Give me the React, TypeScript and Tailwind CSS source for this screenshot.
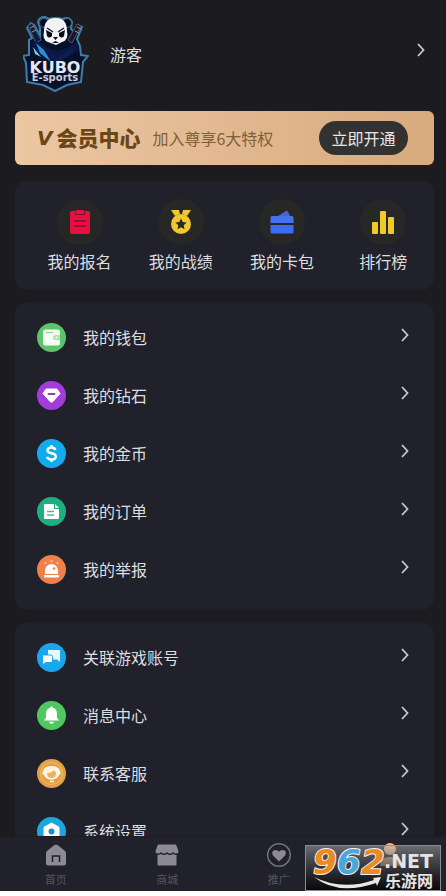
import type { ReactNode } from 'react'

type Item = {
  name: string
  link: string
  icon: ReactNode
}

const Chevron = () => (
  <svg viewBox="0 0 8 14" className="w-2 h-3.5" fill="none">
    <path d="M1 1l5.5 6L1 13" stroke="#c9c9cc" strokeWidth="1.8" />
  </svg>
)

const Logo = () => (
  <svg viewBox="0 0 66 76" className="w-[66px] h-[76px]" aria-label="KUBO E-sports">
    <path
      d="M17 12L15 6Q16 1 22 1L26 3Q32 1 40 3Q46 0 49 6L48 13L51 16L55 9L59 11L54 23L57 30L58 39L65 40L60 46L58 66L44 69L32 75L20 69L4 66L3 47L0 40L6 39V24L9 22L4 12L8 7L11 9L17 19Z"
      fill="#07102b"
      stroke="#3f7ea8"
      strokeWidth="2"
    />
    <path d="M5 10l4-3 9 17-5 3z" fill="#151b30" stroke="#41617f" strokeWidth="1" />
    <path d="M58 10l-4-2-9 16 4 3z" fill="#1c1624" stroke="#5d5262" strokeWidth="1" />
    <path d="M7 12l4-2M9 16l4-2M54 11l4 2M52 15l4 2" stroke="#8398a8" />
    <path d="M10 25L20 27Q32 43 53 26L56 34L44 41L33 47L18 41L8 32Z" fill="#091844" />
    <path d="M13 27L17 37L28 46L21 34Z" fill="#2a8ed1" />
    <path d="M10 31L18 41L12 38Z" fill="#78c9eb" />
    <path d="M24 36L34 42L54 29L49 37L34 47Z" fill="#101c56" />
    <circle cx="21" cy="7" r="4.5" fill="#070a18" stroke="#356a8d" />
    <circle cx="44" cy="7" r="4.5" fill="#070a18" stroke="#356a8d" />
    <path
      d="M21 15Q21 2 32.500 2Q44 2 44 15Q46 24 39 26L33 29L25 26Q19 24 21 15Z"
      fill="#f0f2f3"
    />
    <path d="M23 14l6 3v3q-3 3-5 0zM42 14l-6 3v3q3 3 5 0z" fill="#0b0d16" />
    <path d="M24 12l6 4M41 12l-6 4" stroke="#0b0d16" strokeWidth="1.2" />
    <path d="M30 21h5l-2.500 3zM29 27l3.500-2 3.500 2" fill="#0b0d16" />
    <text
      x="32"
      y="57"
      textAnchor="middle"
      fontFamily="DejaVu Sans"
      fontWeight="700"
      fontSize="16"
      fill="#e6e7ee"
    >
      KUBO
    </text>
    <text
      x="32"
      y="65"
      textAnchor="middle"
      fontFamily="DejaVu Sans"
      fontWeight="700"
      fontSize="10"
      fill="#c9ccd8"
    >
      E-sports
    </text>
  </svg>
)

const stats: Item[] = [
  {
    name: '我的报名',
    link: '#signup',
    icon: (
      <svg viewBox="0 0 24 24" className="size-6">
        <rect x="2" y="1" width="20" height="23" rx="2" fill="#e90f43" />
        <path d="M7 0h10v4a1 1 0 0 1-1 1H8a1 1 0 0 1-1-1z" fill="#6d1730" />
        <rect x="8" y="0" width="8" height="4" rx="1" fill="#e90f43" />
        <path d="M6 11h12M6 16h12" stroke="#6d1730" strokeWidth="1.5" />
      </svg>
    ),
  },
  {
    name: '我的战绩',
    link: '#record',
    icon: (
      <svg viewBox="0 0 24 24" className="size-6">
        <path d="M2 0h8l1 4-5 2zM22 0h-8l-1 4 5 2z" fill="#eec92f" />
        <circle cx="12" cy="14" r="10" fill="#eec92f" />
        <path
          d="M12 8.500l1.700 3.600 3.900.5-2.900 2.700.8 3.900-3.500-1.900-3.500 1.900.8-3.900-2.900-2.700 3.900-.5z"
          fill="#2b2a20"
        />
      </svg>
    ),
  },
  {
    name: '我的卡包',
    link: '#cards',
    icon: (
      <svg viewBox="0 0 24 24" className="size-6">
        <path d="M8 6l8-5q1-1 2 1l2 4z" fill="#4566cf" />
        <path d="M2 6h20a1.500 1.500 0 0 1 1.500 1.500V13H.5V7.500A1.500 1.500 0 0 1 2 6z" fill="#4672ed" />
        <path d="M.5 15h23v7.500a1 1 0 0 1-1 1h-21a1 1 0 0 1-1-1z" fill="#3c6cf2" />
      </svg>
    ),
  },
  {
    name: '排行榜',
    link: '#rank',
    icon: (
      <svg viewBox="0 0 24 24" className="size-6" fill="#eecb28">
        <rect x="1" y="12" width="6" height="12" rx="1" />
        <rect x="9" y="1" width="6" height="23" rx="1" />
        <rect x="17" y="7" width="6" height="17" rx="1" />
      </svg>
    ),
  },
]

const assets: Item[] = [
  {
    name: '我的钱包',
    link: '#wallet',
    icon: (
      <svg viewBox="0 0 29 29" className="size-[29px]">
        <circle cx="14.500" cy="14.500" r="14.500" fill="#5cc56c" />
        <rect x="6" y="6.500" width="17" height="16" rx="2.500" fill="#f3fff3" />
        <path d="M9 9.500h7" stroke="#8ed99a" strokeWidth="1.300" />
        <path d="M23 12h-4.500a2.500 2.500 0 0 0 0 5H23z" fill="#a9e2b0" />
        <circle cx="19.500" cy="14.500" r="1" fill="#fff" />
      </svg>
    ),
  },
  {
    name: '我的钻石',
    link: '#diamond',
    icon: (
      <svg viewBox="0 0 29 29" className="size-[29px]">
        <circle cx="14.500" cy="14.500" r="14.500" fill="#a43cda" />
        <path
          d="M9 8h11l3 4.500-7 8q-1.500 1.500-3 0l-7-8z"
          fill="#fff"
          stroke="#fff"
          strokeLinejoin="round"
        />
        <path d="M11.500 13h6" stroke="#8d3fb4" strokeWidth="1.800" strokeLinecap="round" />
      </svg>
    ),
  },
  {
    name: '我的金币',
    link: '#coin',
    icon: (
      <svg viewBox="0 0 29 29" className="size-[29px]">
        <circle cx="14.500" cy="14.500" r="14.500" fill="#14abee" />
        <path
          d="M18.500 11q-1-2.500-4-2.500-4 0-4 2.800 0 2.200 4 3 4.300.8 4.300 3.200 0 3-4.300 3-3.500 0-4.500-2.700M14.500 6v2.500M14.500 20.500V23"
          fill="none"
          stroke="#fff"
          strokeWidth="2.400"
        />
      </svg>
    ),
  },
  {
    name: '我的订单',
    link: '#order',
    icon: (
      <svg viewBox="0 0 29 29" className="size-[29px]">
        <circle cx="14.500" cy="14.500" r="14.500" fill="#1fae81" />
        <path d="M8 7h9v5h5v9a1 1 0 0 1-1 1H8a1 1 0 0 1-1-1V8a1 1 0 0 1 1-1z" fill="#fff" />
        <path d="M18 7l4 4h-4z" fill="#e2fff3" />
        <path d="M10 14.500h7M10 18h7" stroke="#58b792" strokeWidth="1.400" />
      </svg>
    ),
  },
  {
    name: '我的举报',
    link: '#report',
    icon: (
      <svg viewBox="0 0 29 29" className="size-[29px]">
        <circle cx="14.500" cy="14.500" r="14.500" fill="#ee804a" />
        <path d="M8 19v-3.500a6.500 6.500 0 0 1 13 0V19z" fill="#fff" />
        <rect x="7" y="20" width="15" height="2.500" rx="1" fill="#fff" />
        <circle cx="17" cy="13.500" r="1.300" fill="#ee804a" />
        <g fill="#ffd6bd">
          <circle cx="8.500" cy="8" r="1" />
          <circle cx="14.500" cy="6" r="1" />
          <circle cx="20.500" cy="8" r="1" />
        </g>
      </svg>
    ),
  },
]

const services: Item[] = [
  {
    name: '关联游戏账号',
    link: '#account',
    icon: (
      <svg viewBox="0 0 29 29" className="size-[29px]">
        <circle cx="14.500" cy="14.500" r="14.500" fill="#18a7ec" />
        <path d="M11 7h12v12l-3-2.500h-9z" fill="#e8f8ff" />
        <path d="M6 12h8q1.500 0 1.500 1.500V18q0 1.500-1.500 1.500H9L5.500 22V12.500z" fill="#fff" stroke="#18a7ec" />
      </svg>
    ),
  },
  {
    name: '消息中心',
    link: '#message',
    icon: (
      <svg viewBox="0 0 29 29" className="size-[29px]">
        <circle cx="14.500" cy="14.500" r="14.500" fill="#4fc95f" />
        <path
          d="M14.500 5.500a1.300 1.300 0 0 1 1.300 1.300q4.200 1.200 4.200 6v4l2.200 2.700H6.800L9 16.800v-4q0-4.800 4.200-6a1.300 1.300 0 0 1 1.300-1.300z"
          fill="#fff"
        />
        <path d="M12 20.800h5a2.500 2 0 0 1-5 0z" fill="#fff" />
      </svg>
    ),
  },
  {
    name: '联系客服',
    link: '#support',
    icon: (
      <svg viewBox="0 0 29 29" className="size-[29px]">
        <circle cx="14.500" cy="14.500" r="14.500" fill="#e3a044" />
        <circle cx="14.500" cy="14.500" r="11" fill="none" stroke="#efbd74" />
        <path
          d="M7 16q-3-1-1-4 1-5 8.500-5t8.500 5q2 3-1 4-1 4-7.500 5Q8 20 7 16z"
          fill="#fff3df"
        />
        <path d="M10 14q5 0 7-3l2 3q0 5-4.500 5T10 14z" fill="#e8b364" />
        <path d="M13 22.500h4" stroke="#fff3df" strokeWidth="1.500" />
      </svg>
    ),
  },
  {
    name: '系统设置',
    link: '#settings',
    icon: (
      <svg viewBox="0 0 29 29" className="size-[29px]">
        <circle cx="14.500" cy="14.500" r="14.500" fill="#1ba6dd" />
        <path
          d="M14.500 6l7.500 4.300v8.400L14.500 23 7 18.700v-8.400z"
          fill="#fff"
          stroke="#fff"
          strokeLinejoin="round"
        />
        <circle cx="14.500" cy="14.500" r="3" fill="#1b8fc0" />
      </svg>
    ),
  },
]

const tabs: Item[] = [
  {
    name: '首页',
    link: '#home',
    icon: (
      <svg viewBox="0 0 24 24" className="size-6">
        <path
          d="M10.500 2q1.500-1 3 0l7 5.500q1.500 1 1.500 3V20q0 2.500-2.500 2.500h-15Q2 22.500 2 20v-9.500q0-2 1.500-3z"
          fill="#8b8a96"
        />
        <path d="M8.500 19v-6h7v6" fill="none" stroke="#20212a" strokeWidth="1.500" />
      </svg>
    ),
  },
  {
    name: '商城',
    link: '#shop',
    icon: (
      <svg viewBox="0 0 24 24" className="size-6" fill="#8b8a96">
        <path d="M3 1.500h18L23.500 8q0 2.500-2.500 2.500-2 0-3-1.500-1 1.500-3 1.500T12 9q-1 1.500-3 1.500T6 9q-1 1.500-3 1.500Q.5 10.500.5 8z" />
        <path d="M2.500 12q2 0 3.500-1 1.500 1 3 1t3-1q1.500 1 3 1t3-1q1.500 1 3.500 1v9.500q0 1-1 1h-17q-1 0-1-1z" />
      </svg>
    ),
  },
  {
    name: '推广',
    link: '#promote',
    icon: (
      <svg viewBox="0 0 24 24" className="size-6">
        <circle cx="12" cy="12" r="11.300" fill="none" stroke="#74747f" strokeWidth="1.400" />
        <path
          d="M12 18.500l-6-6q-2-3 .5-5 3-1.500 5.500 1 2.500-2.500 5.500-1 2.500 2 .5 5z"
          fill="#8b8a96"
        />
      </svg>
    ),
  },
  {
    name: '我的',
    link: '#mine',
    icon: (
      <svg viewBox="0 0 24 24" className="size-6" fill="#efbd86">
        <circle cx="12" cy="6" r="6" />
        <path d="M2 23q0-9 10-9t10 9z" />
      </svg>
    ),
  },
]

const ListCard = ({ items }: { items: Item[] }) => (
  <ul className="bg-[#20212a] rounded-xl pt-1.5 pb-3">
    {items.map((item) => (
      <li key={item.name}>
        <a href={item.link} className="flex items-center h-[58px] pl-[22px] pr-[25px]">
          {item.icon}
          <span className="ml-[17px] flex-1">{item.name}</span>
          <span className="pb-1">
            <Chevron />
          </span>
        </a>
      </li>
    ))}
  </ul>
)

const Watermark = () => (
  <div className="absolute right-[5px] bottom-[5px] border border-[#8d8d90] bg-linear-to-b from-[#b4b4ba80] to-[#08080af2]">
    <svg viewBox="0 0 134 44" className="w-[134px] h-11 block">
      <g
        fontFamily="DejaVu Sans"
        fontWeight="700"
        fontStyle="italic"
        fontSize="34"
        stroke="#f4f4f4"
        strokeWidth="2"
        strokeLinejoin="round"
        paintOrder="stroke"
      >
        <text x="7" y="28" fill="#ee8a1d">
          9
        </text>
        <text x="31" y="28" fill="#4ba6dc">
          6
        </text>
        <text x="55" y="28" fill="#ee8a1d">
          2
        </text>
      </g>
      <path d="M8 31q28 14 60 3l-1-2 8-1-4 9-1-3Q32 50 8 31z" fill="#e8e8e8" />
      <text x="78" y="22" fontFamily="DejaVu Sans" fontWeight="700" fontSize="19" fill="#e4e4e4">
        .NET
      </text>
      <text
        x="79"
        y="41"
        fontFamily="Noto Sans CJK SC"
        fontWeight="700"
        fontSize="16"
        fill="#e4e4e4"
      >
        乐游网
      </text>
    </svg>
  </div>
)

const App = () => {
  return (
    <div className="relative h-screen flex flex-col bg-white pb-[5px] font-['Noto_Sans_CJK_SC',sans-serif] text-base text-[#dedee0]">
      <main className="flex-1 min-h-0 overflow-hidden bg-[#1c1b1f] pl-[15px] pr-3">
        <header>
          <a href="#profile" className="flex items-center pt-4 pb-[19px] pl-2 pr-[9px]">
            <Logo />
            <span className="ml-[21px] flex-1">游客</span>
            <span className="pb-2">
              <Chevron />
            </span>
          </a>
        </header>

        <section className="flex items-center h-[54px] rounded-md bg-linear-to-r from-[#ebc7a2] to-[#d8aa7e] pl-[22px] pr-[26px] text-[#6b4618] whitespace-nowrap">
          <span className="font-['DejaVu_Sans',sans-serif] font-bold italic text-xl">V</span>
          <h2 className="ml-1 text-[21px] font-black">会员中心</h2>
          <p className="ml-3 flex-1 text-[#805f3b]">加入尊享6大特权</p>
          <button className="w-[89px] h-[34px] rounded-full bg-[#333230] text-[#e6e6e6]">
            立即开通
          </button>
        </section>

        <ul className="mt-4 grid grid-cols-4 rounded-xl bg-[#20212a] pl-3.5 pt-[18px] pb-[17px]">
          {stats.map((stat) => (
            <li key={stat.name}>
              <a href={stat.link} className="flex flex-col items-center">
                <span className="flex items-center justify-center size-[46px] rounded-full bg-[#272826]">
                  {stat.icon}
                </span>
                <span className="mt-1 leading-6">{stat.name}</span>
              </a>
            </li>
          ))}
        </ul>

        <div className="mt-3 flex flex-col gap-3">
          <ListCard items={assets} />
          <ListCard items={services} />
        </div>
      </main>

      <nav className="grid grid-cols-4 bg-[#20212a] border-t border-[#1c1d25] pt-1.5 pb-1">
        {tabs.map((tab) => (
          <a
            key={tab.name}
            href={tab.link}
            className="flex flex-col items-center gap-1 text-[11px] leading-4 text-[#55555c]"
          >
            {tab.icon}
            {tab.name}
          </a>
        ))}
      </nav>

      <Watermark />
    </div>
  )
}

export default App
